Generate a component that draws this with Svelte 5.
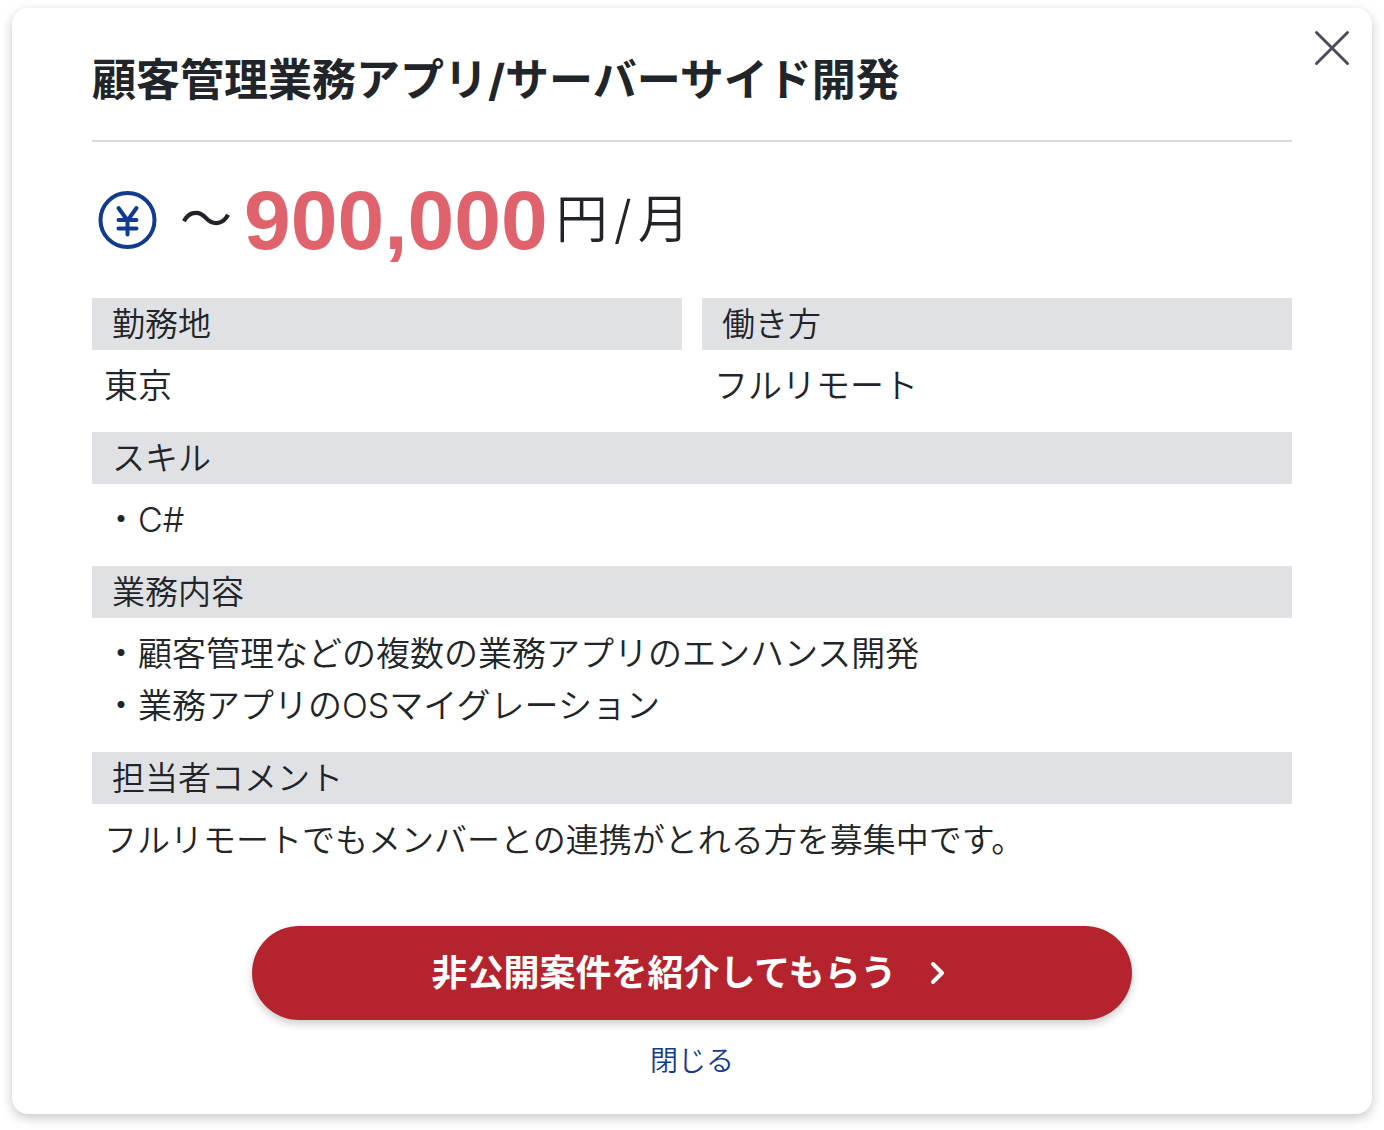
<script>
    let open = true;

    const job = {
        title: '顧客管理業務アプリ/サーバーサイド開発',
        price: '900,000'
    };

    const places = [
        { label: '勤務地', text: '東京' },
        { label: '働き方', text: 'フルリモート' }
    ];

    const skills = ['C#'];
    const duties = [
        '顧客管理などの複数の業務アプリのエンハンス開発',
        '業務アプリのOSマイグレーション'
    ];

    function close() {
        open = false;
    }
</script>

{#if open}
    <div class="modal" role="dialog" aria-labelledby="job-title">
        <button class="close" type="button" aria-label="閉じる" on:click={close}>
            <svg viewBox="0 0 36 36" width="36" height="36" aria-hidden="true">
                <path d="M2.5 2.5 33.5 33.5M33.5 2.5 2.5 33.5" fill="none" stroke="#4b4e57" stroke-width="3" stroke-linecap="round" />
            </svg>
        </button>

        <h2 id="job-title">{job.title}</h2>

        <p class="price">
            <svg viewBox="0 0 60 60" width="60" height="60" aria-hidden="true">
                <g fill="none" stroke="#123a8f" stroke-width="4" stroke-linecap="round" stroke-linejoin="round">
                    <circle cx="29.5" cy="30" r="27" />
                    <path d="M20.5 18 29.5 30.5 38.5 18M29.5 30.5V44.5M20.5 30H38.5M20.5 38.5H38.5" />
                </g>
            </svg>
            <span class="tilde">〜</span>
            <strong>{job.price}</strong>
            <span class="unit">円<span class="slash">/</span>月</span>
        </p>

        <div class="columns">
            {#each places as place}
                <section>
                    <h3>{place.label}</h3>
                    <p>{place.text}</p>
                </section>
            {/each}
        </div>

        <section>
            <h3>スキル</h3>
            <ul>
                {#each skills as skill}
                    <li>・{skill}</li>
                {/each}
            </ul>
        </section>

        <section>
            <h3>業務内容</h3>
            <ul>
                {#each duties as duty}
                    <li>・{duty}</li>
                {/each}
            </ul>
        </section>

        <section>
            <h3>担当者コメント</h3>
            <p class="comment">フルリモートでもメンバーとの連携がとれる方を募集中です。</p>
        </section>

        <div class="actions">
            <a class="apply" href="#apply">
                非公開案件を紹介してもらう
                <svg viewBox="0 0 24 24" width="24" height="24" aria-hidden="true">
                    <path d="M4 3 13 12 4 21" fill="none" stroke="#fff" stroke-width="4" stroke-linecap="round" stroke-linejoin="round" />
                </svg>
            </a>
            <button class="dismiss" type="button" on:click={close}>閉じる</button>
        </div>
    </div>
{/if}

<style>
    :global(body) {
        margin: 0;
        background: #fff;
    }

    .modal {
        position: relative;
        box-sizing: border-box;
        margin: 8px 12px 16px;
        padding: 40px 80px 32px;
        border-radius: 16px;
        background: #fff;
        box-shadow: 0 4px 12px rgba(0, 0, 0, 0.22);
        color: #212529;
        font-family: Inter, "Noto Sans CJK JP", sans-serif;
        font-size: 34px;
        font-weight: 350;
        line-height: 52px;
    }

    h2, h3, p, ul {
        margin: 0;
        padding: 0;
    }

    ul {
        list-style: none;
    }

    button {
        padding: 0;
        border: 0;
        background: none;
        font-family: inherit;
        font-weight: inherit;
        cursor: pointer;
    }

    .close {
        position: absolute;
        top: 22px;
        right: 22px;
        line-height: 0;
    }

    h2 {
        padding-bottom: 28px;
        border-bottom: 2px solid #dbdbdb;
        font-size: 44px;
        font-weight: 700;
        line-height: 64px;
    }

    .price {
        display: flex;
        align-items: center;
        height: 124px;
        margin: 16px 0;
        padding-left: 6px;
    }

    .tilde {
        margin: 0 12px 0 22px;
        font-size: 52px;
        font-weight: 400;
    }

    .price strong {
        color: #e0626c;
        font-family: "Liberation Sans", sans-serif;
        font-size: 84px;
        font-weight: 700;
        line-height: 96px;
    }

    .unit {
        margin-left: 8px;
        font-size: 52px;
    }

    .slash {
        margin: 0 6px;
    }

    .columns {
        display: grid;
        grid-template-columns: 1fr 1fr;
        gap: 20px;
    }

    section {
        margin-bottom: 20px;
    }

    h3 {
        padding: 0 20px;
        background: #e0e1e5;
        font-size: 33px;
        font-weight: inherit;
    }

    section p,
    ul {
        padding: 10px 12px 0;
    }

    section .comment {
        font-size: 33px;
    }

    .actions {
        display: flex;
        flex-direction: column;
        align-items: center;
        padding-top: 40px;
    }

    .apply {
        display: flex;
        align-items: center;
        justify-content: center;
        gap: 32px;
        box-sizing: border-box;
        width: 880px;
        max-width: 100%;
        padding: 21px;
        border-radius: 48px;
        background: #b5242e;
        box-shadow: 0 4px 8px rgba(0, 0, 0, 0.2);
        color: #fff;
        font-size: 36px;
        font-weight: 700;
        text-decoration: none;
    }

    .dismiss {
        margin-top: 20px;
        color: #123a8f;
        font-size: 28px;
        line-height: 42px;
    }
</style>
